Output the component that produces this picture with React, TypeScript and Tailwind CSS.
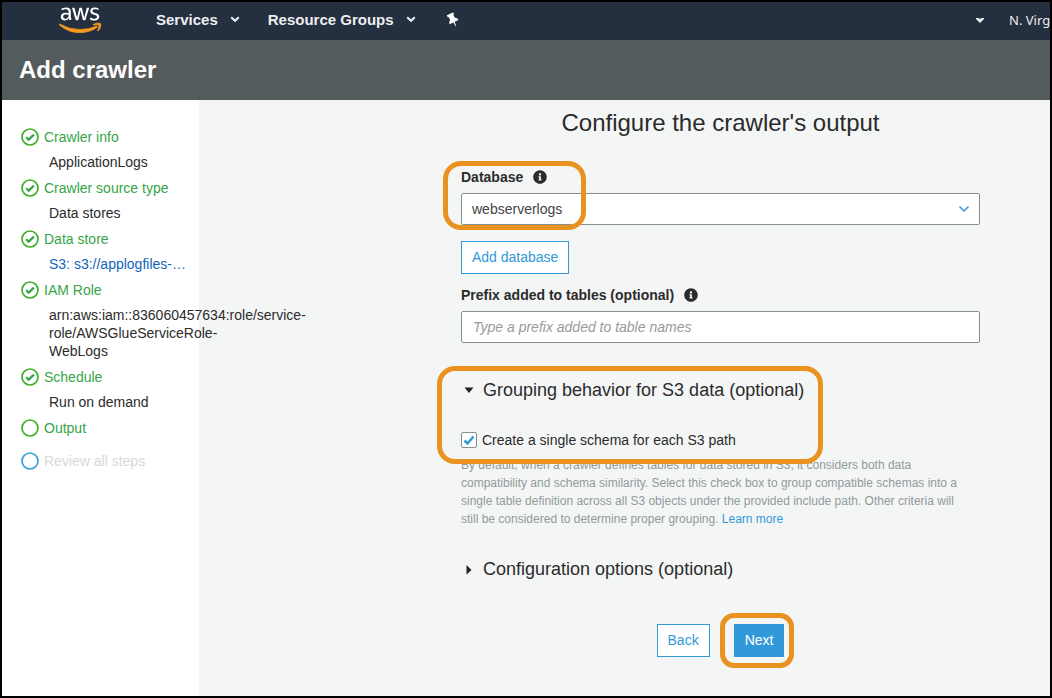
import { useState, type ReactNode } from "react";
import { FaAws, FaInfoCircle } from "react-icons/fa";

type StepState = "done" | "current" | "pending";

interface Step {
  title: string;
  state: StepState;
  detail?: ReactNode;
}

const steps: Step[] = [
  { title: "Crawler info", state: "done", detail: "ApplicationLogs" },
  { title: "Crawler source type", state: "done", detail: "Data stores" },
  {
    title: "Data store",
    state: "done",
    detail: (
      <a href="#data-store" className="text-[#1166bb]">
        S3: s3://applogfiles-…
      </a>
    ),
  },
  {
    title: "IAM Role",
    state: "done",
    detail: (
      <>
        arn:aws:iam::836060457634:role/service-
        <br />
        role/AWSGlueServiceRole-
        <br />
        WebLogs
      </>
    ),
  },
  { title: "Schedule", state: "done", detail: "Run on demand" },
  { title: "Output", state: "current" },
  { title: "Review all steps", state: "pending" },
];

function StepIcon({ state }: { state: StepState }) {
  return (
    <svg viewBox="0 0 18 18" className="size-[18px] shrink-0" fill="none" aria-hidden="true">
      <circle cx="9" cy="9" r="8" stroke={state === "pending" ? "#3b9fdb" : "#3fae29"} strokeWidth="1.7" />
      {state === "done" && <path d="M5.200 9.200l2.500 2.400L12.900 6.600" stroke="#35a548" strokeWidth="2.2" />}
    </svg>
  );
}

function NavChevron() {
  return (
    <svg viewBox="0 0 10 7" className="h-[7px] w-[10px]" fill="none" aria-hidden="true">
      <path d="M1.2 1.2L5 4.8l3.8-3.6" stroke="#eee" strokeWidth="2" />
    </svg>
  );
}

function PinIcon() {
  return (
    <svg viewBox="0 0 12 14" className="h-[14px] w-3 -rotate-[26deg]" fill="#fff" aria-hidden="true">
      <path d="M2.500 0h7v2.400H8.600v3.400Q11 6.800 11 9.400H6.700L6.300 14h-.6l-.4-4.600H1Q1 6.800 3.400 5.800V2.400h-.9z" />
    </svg>
  );
}

function AwsLogo() {
  return (
    <a href="#home" aria-label="AWS home" className="block">
      <svg className="absolute size-0" aria-hidden="true">
        <defs>
          <linearGradient id="aws-fill" x1="0" y1="0" x2="0" y2="1">
            <stop offset="0.59" stopColor="#ffffff" />
            <stop offset="0.59" stopColor="#f79a1c" />
          </linearGradient>
          <linearGradient id="aws-edge" x1="0" y1="0" x2="0" y2="1">
            <stop offset="0.59" stopColor="#ffffff" stopOpacity="0" />
            <stop offset="0.59" stopColor="#f79a1c" />
          </linearGradient>
        </defs>
      </svg>
      <FaAws className="h-[34px] w-[42px] fill-[url(#aws-fill)] stroke-[url(#aws-edge)] [stroke-width:12]" />
    </a>
  );
}

function Highlight({ className }: { className: string }) {
  return (
    <span
      aria-hidden="true"
      className={`pointer-events-none absolute z-10 border-[5px] border-[#e9921f] ${className}`}
    />
  );
}

function Disclosure({ open, onToggle, children }: { open: boolean; onToggle: () => void; children: ReactNode }) {
  return (
    <h2>
      <button
        type="button"
        aria-expanded={open}
        onClick={onToggle}
        className="flex h-6 items-center gap-[6px] text-lg leading-6 whitespace-nowrap"
      >
        <svg viewBox="0 0 16 16" className="size-4" fill="#222" aria-hidden="true">
          {open ? <path d="M3.500 5.500h9L8 11z" /> : <path d="M5.500 4v9.500L10.500 9z" />}
        </svg>
        {children}
      </button>
    </h2>
  );
}

export default function App() {
  const [groupOpen, setGroupOpen] = useState(true);
  const [configOpen, setConfigOpen] = useState(false);
  const [single, setSingle] = useState(true);

  return (
    <div className="flex min-h-screen flex-col border-2 border-black bg-[#f4f6f6] font-['Liberation_Sans',Arial,sans-serif] text-sm text-[#2b2b2b]">
      <nav className="flex h-[38px] items-center overflow-hidden bg-[#242f40] pb-[2px] pl-[57px] text-[15px] font-bold text-[#eee] [text-shadow:0_1px_0_#000]">
        <AwsLogo />
        <button type="button" className="ml-[55px] flex items-center gap-3">
          Services
          <NavChevron />
        </button>
        <button type="button" className="ml-7 flex items-center gap-3 whitespace-nowrap">
          Resource Groups
          <NavChevron />
        </button>
        <button type="button" aria-label="Pin shortcuts" className="ml-[31px]">
          <PinIcon />
        </button>
        <button
          type="button"
          className="ml-auto flex w-[74px] items-center overflow-hidden font-['Noto_Sans',sans-serif] text-[13px] font-normal whitespace-nowrap"
        >
          <svg viewBox="0 0 8 5" className="mr-[25px] h-[5px] w-2 shrink-0" fill="#eee" aria-hidden="true">
            <path d="M0 0h2.5L4 1l1.500-1H8v1L4 5 0 1z" />
          </svg>
          N. Virg
        </button>
      </nav>

      <header className="flex h-[60px] items-center bg-[#545b5c] px-[17px]">
        <h1 className="text-2xl font-bold text-white">Add crawler</h1>
      </header>

      <div className="flex flex-1">
        <aside className="relative w-[197px] shrink-0 bg-white pt-5 pl-[19px]">
          <ol>
            {steps.map((step) => (
              <li key={step.title}>
                <div
                  className={`flex h-[33px] items-center gap-[5px] ${
                    step.state === "pending" ? "text-[#d5d9d9]" : "text-[#35a548]"
                  }`}
                >
                  <StepIcon state={step.state} />
                  {step.title}
                </div>
                {step.detail && <div className="pl-7 leading-[18px] whitespace-nowrap">{step.detail}</div>}
              </li>
            ))}
          </ol>
        </aside>

        <main className="min-w-0 flex-1 pt-[7px] pr-[70px] pb-9 pl-[262px]">
          <h2 className="text-center text-2xl leading-8">Configure the crawler's output</h2>

          <div className="relative mt-[30px]">
            <Highlight className="-top-2 -left-[18px] h-[69px] w-[143px] rounded-[18px]" />
            <label htmlFor="database" className="flex items-center gap-[10px] leading-4 font-bold">
              Database
              <FaInfoCircle className="size-[14px]" />
            </label>
            <div className="relative mt-2">
              <select
                id="database"
                className="h-8 w-full appearance-none rounded-[2px] border border-[#879090] bg-white px-[10px] text-[#444]"
              >
                <option>webserverlogs</option>
              </select>
              <svg
                viewBox="0 0 12 8"
                className="pointer-events-none absolute top-3 right-[10px] h-2 w-3"
                fill="none"
                aria-hidden="true"
              >
                <path d="M1.500 1.500L6 6l4.500-4.500" stroke="#3299d9" strokeWidth="1.500" />
              </svg>
            </div>
          </div>

          <button type="button" className="mt-4 block h-[33px] border border-[#3299d9] bg-white px-[10px] pb-[2px] text-[#3299d9]">
            Add database
          </button>

          <label htmlFor="prefix" className="mt-[13px] flex items-center gap-[10px] leading-4 font-bold">
            Prefix added to tables (optional)
            <FaInfoCircle className="size-[14px]" />
          </label>
          <input
            id="prefix"
            type="text"
            placeholder="Type a prefix added to table names"
            className="mt-2 block h-8 w-full rounded-[2px] border border-[#879090] bg-white px-[11px] placeholder:text-[#999] placeholder:italic"
          />

          <section className="relative mt-[35px]">
            <Highlight className="-top-3 -left-6 h-[98px] w-[386px] rounded-[18px]" />
            <Disclosure open={groupOpen} onToggle={() => setGroupOpen(!groupOpen)}>
              Grouping behavior for S3 data (optional)
            </Disclosure>
            {groupOpen && (
              <>
                <label className="mt-7 flex h-5 items-center gap-[5px]">
                  <span className="relative size-4">
                    <input
                      type="checkbox"
                      checked={single}
                      onChange={(e) => setSingle(e.target.checked)}
                      className="block size-4 appearance-none rounded-[2px] border border-[#879090] bg-white"
                    />
                    {single && (
                      <svg viewBox="0 0 16 16" className="pointer-events-none absolute inset-0 size-4" fill="none" aria-hidden="true">
                        <path d="M3.500 8.500l3 3 6-7" stroke="#3299d9" strokeWidth="2.500" />
                      </svg>
                    )}
                  </span>
                  Create a single schema for each S3 path
                </label>
                <p className="mt-[6px] pr-4 text-xs leading-[18px] text-[#929a9b]">
                  By default, when a crawler defines tables for data stored in S3, it considers both data compatibility and
                  schema similarity. Select this check box to group compatible schemas into a single table definition
                  across all S3 objects under the provided include path. Other criteria will still be considered to
                  determine proper grouping.{" "}
                  <a href="#learn-more" className="text-[#3299d9]">
                    Learn more
                  </a>
                </p>
              </>
            )}
          </section>

          <section className="mt-[29px]">
            <Disclosure open={configOpen} onToggle={() => setConfigOpen(!configOpen)}>
              Configuration options (optional)
            </Disclosure>
          </section>

          <div className="mt-[43px] flex justify-center gap-6">
            <button type="button" className="h-[33px] border border-[#3299d9] bg-white px-[10px] pb-[2px] text-[#3299d9]">
              Back
            </button>
            <div className="relative">
              <Highlight className="-top-[11px] -left-[14px] h-[55px] w-[74px] rounded-[14px]" />
              <button type="button" className="h-[33px] border border-[#3299d9] bg-[#3299d9] px-[10px] pb-[2px] text-white">
                Next
              </button>
            </div>
          </div>
        </main>
      </div>
    </div>
  );
}
